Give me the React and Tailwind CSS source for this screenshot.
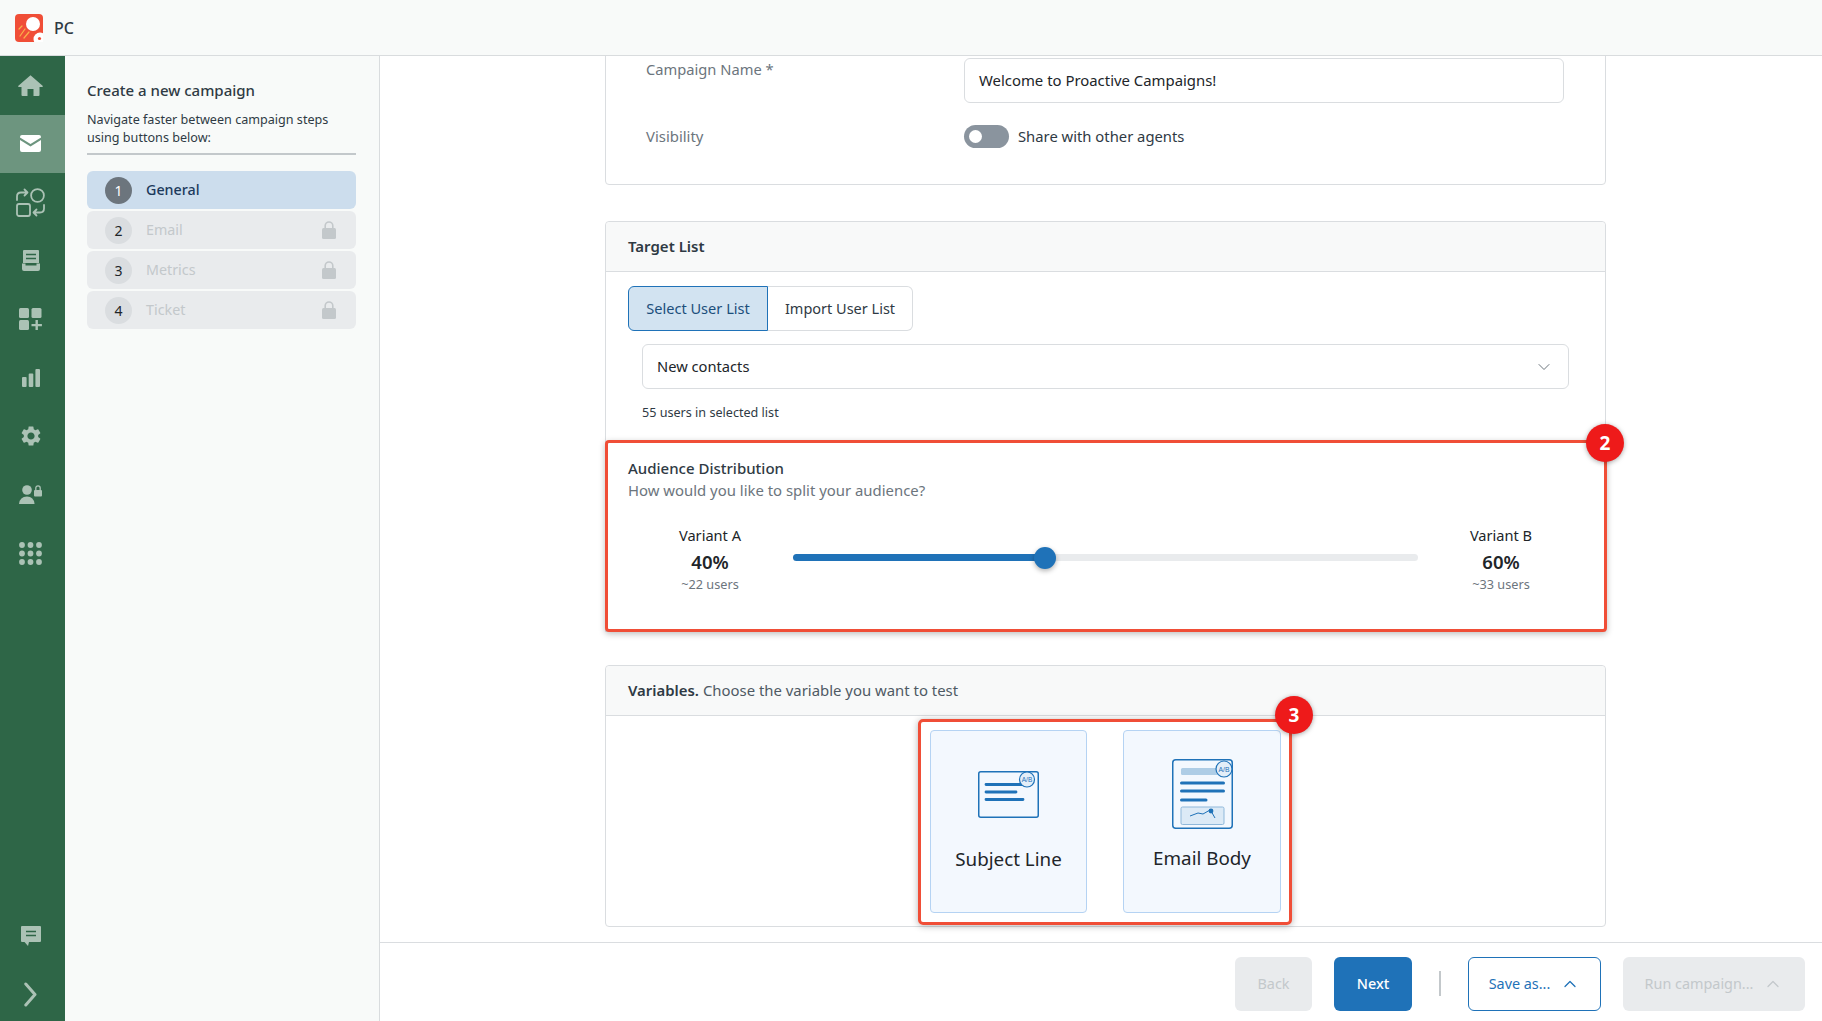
import React from 'react'
import { ChevronDown, ChevronUp } from 'lucide-react'
import { MdSettings } from 'react-icons/md'

const steps = [
  { num: 1, name: 'General', active: true },
  { num: 2, name: 'Email' },
  { num: 3, name: 'Metrics' },
  { num: 4, name: 'Ticket' },
]

function Logo() {
  return (
    <svg width="28" height="28" viewBox="0 0 28 28">
      <rect width="28" height="28" rx="4" fill="#f04e37" />
      <circle cx="18" cy="10" r="7" fill="#fff" />
      <path d="M5 22l5-7M9 24l5-6M4 15l3-3" stroke="#f9b24a" strokeWidth="1.2" strokeLinecap="round" />
      <circle cx="25" cy="25" r="6.5" fill="#fff" />
      <circle cx="24.5" cy="24.5" r="1.6" fill="#f04e37" />
    </svg>
  )
}

const c = '#abc2b5'

const sideIcons = [
  <svg width="25" height="21" viewBox="0 0 25 21"><path fill={c} d="M12.5.3 24.6 10.8Q25.2 12 23.8 12H21.5V20Q21.5 21 20.5 21H15.5V14H9.5V21H4.5Q3.5 21 3.5 20V12H1.2Q-.2 12 .4 10.8Z" /></svg>,
  <svg width="21" height="17" viewBox="0 0 21 17"><path fill="#fff" d="M0 2Q0 0 2 0H19Q21 0 21 2V2.5L10.5 9 0 2.5ZM0 5 10.5 11.5 21 5V15Q21 17 19 17H2Q0 17 0 15Z" /></svg>,
  <svg width="29" height="29" viewBox="0 0 29 29" fill="none" stroke={c} strokeWidth="1.8" strokeLinecap="round" strokeLinejoin="round">
    <circle cx="21.5" cy="7.5" r="6.4" />
    <rect x="1" y="16" width="13" height="12" rx="2" />
    <path d="M1 12V8.5Q1 4.5 5 4.5H11M8.5 1.5l3 3-3 3M28 17v3.5Q28 24.5 24 24.5H18M20.5 21.5l-3 3 3 3" />
  </svg>,
  <svg width="18" height="21" viewBox="0 0 18 21">
    <path fill={c} d="M2 0H16Q17 0 17 1V13H1V1Q1 0 2 0Z" />
    <path stroke="#2e6647" strokeWidth="1.6" d="M4 4.5H14M4 8.5H14" />
    <path fill={c} d="M0 13.5H3.5V15.5H14.5V13.5H18V19Q18 21 16 21H2Q0 21 0 19Z" />
  </svg>,
  <svg width="23" height="22" viewBox="0 0 23 22" fill={c}>
    <rect width="10" height="10" rx="1.5" />
    <rect x="12.5" width="10" height="10" rx="1.5" />
    <rect y="12" width="10" height="10" rx="1.5" />
    <path d="M16.5 12h2.4v4h4v2.2h-4V22h-2.4v-3.8h-4V16h4Z" />
  </svg>,
  <svg width="18" height="18" viewBox="0 0 18 18" fill={c}>
    <rect y="8" width="4.6" height="10" rx="1" />
    <rect x="6.7" y="4.5" width="4.6" height="13.5" rx="1" />
    <rect x="13.4" width="4.6" height="18" rx="1" />
  </svg>,
  <MdSettings size={24} color={c} />,
  <svg width="23" height="19" viewBox="0 0 23 19" fill={c}>
    <circle cx="8" cy="5" r="4.8" />
    <path d="M0 19Q.8 11.5 8 11.5 14.8 11.5 15.6 19Z" />
    <rect x="15" y="5" width="8" height="6.5" rx="1" />
    <path d="M16.8 5.5V3a2.2 2.2 0 0 1 4.4 0V5.5" fill="none" stroke={c} strokeWidth="1.3" />
  </svg>,
  <svg width="23" height="23" viewBox="0 0 23 23" fill={c}>
    {[3, 11.5, 20].map((y) => [3, 11.5, 20].map((x) => <circle key={x + '-' + y} cx={x} cy={y} r="2.9" />))}
  </svg>,
]

function SideItem({ active, children }) {
  return (
    <div className={`h-[58.5px] flex items-center justify-center pr-[4px] ${active ? 'bg-[#6d957f]' : ''}`}>{children}</div>
  )
}

function Lock() {
  return (
    <svg width="14" height="18" viewBox="0 0 14 18">
      <path d="M3.2 8V4.8a3.8 3.8 0 0 1 7.6 0V8" fill="none" stroke="#c3c8cb" strokeWidth="1.6" />
      <rect y="7" width="14" height="11" rx="1.5" fill="#c3c8cb" />
    </svg>
  )
}

function Badge({ className, children }) {
  return (
    <div className={`absolute w-[38px] h-[38px] rounded-full bg-[#ee1a1a] text-white font-bold text-[19px] flex items-center justify-center shadow-[0_1px_5px_rgba(0,0,0,0.35)] z-10 ${className}`}>
      {children}
    </div>
  )
}

function SubjectIcon() {
  return (
    <svg width="61" height="47" viewBox="0 0 61 47" fill="none">
      <rect x="0.75" y="0.75" width="59.5" height="45.5" rx="2" stroke="#1f72b8" strokeWidth="1.5" />
      <path d="M8 13.5H46M8 21H38M8 28.5H45" stroke="#1f72b8" strokeWidth="2.8" strokeLinecap="round" />
      <circle cx="49" cy="8.5" r="7.5" fill="#e3eef8" stroke="#1f72b8" strokeWidth="1.2" />
      <text x="49" y="11" textAnchor="middle" fontSize="6.5" fill="#1f72b8" fontFamily="Liberation Sans">A/B</text>
    </svg>
  )
}

function BodyIcon() {
  return (
    <svg width="61" height="70" viewBox="0 0 61 70" fill="none">
      <rect x="0.75" y="0.75" width="59.5" height="68.5" rx="3" stroke="#1f72b8" strokeWidth="1.5" />
      <rect x="9" y="9" width="37" height="7" rx="1.5" fill="#aecde6" />
      <path d="M9.5 24H51.5M9.5 32H51.5M9.5 41H34" stroke="#1f72b8" strokeWidth="3" strokeLinecap="round" />
      <rect x="9" y="48" width="43" height="17.5" rx="1.5" fill="#dceaf6" stroke="#8fb8da" />
      <path d="M18 57L26 54L31 55L38 51M39 52L43 59" stroke="#1f72b8" strokeWidth="1" />
      <circle cx="39" cy="52" r="2.4" fill="#1f72b8" />
      <circle cx="52" cy="10" r="8" fill="#e3eef8" stroke="#1f72b8" strokeWidth="1.2" />
      <text x="52" y="12.6" textAnchor="middle" fontSize="6.8" fill="#1f72b8" fontFamily="Liberation Sans">A/B</text>
    </svg>
  )
}

function VariantCol({ name, pct, users }) {
  return (
    <div className="w-[130px] flex flex-col items-center text-[#212529]">
      <span className="text-[14.6px] leading-[20px]">{name}</span>
      <span className="text-[18.5px] font-semibold leading-[24px] mt-[5px]">{pct}</span>
      <span className="text-[12.7px] leading-[18px] mt-[1px] text-[#6c757d]">{users}</span>
    </div>
  )
}

export default function App() {
  return (
    <div className="w-[1822px] h-[1021px] overflow-hidden flex flex-col bg-white text-[#2f3a44] font-['Noto_Sans',sans-serif]">
      <header className="h-[56px] shrink-0 border-b border-[#d9dcde] bg-[#f8faf9] flex items-center pl-[15px] gap-[11px]">
        <Logo />
        <span className="text-[16px] font-medium">PC</span>
      </header>

      <div className="flex-1 flex min-h-0">
        <nav className="w-[65px] shrink-0 bg-[#2e6647] flex flex-col">
          {sideIcons.map((icon, i) => (
            <SideItem key={i} active={i === 1}>{icon}</SideItem>
          ))}
          <div className="mt-auto">
            <SideItem>
              <svg width="20" height="20" viewBox="0 0 20 20">
                <path fill={c} d="M1 0H19Q20 0 20 1V15Q20 16 19 16H8L7 20 3.5 16H1Q0 16 0 15V1Q0 0 1 0Z" />
                <path stroke="#2e6647" strokeWidth="1.6" d="M5 5.5H15M5 9.5H15" />
              </svg>
            </SideItem>
            <div className="h-[53px] mt-[3px] flex items-center justify-center pr-[4px]">
              <svg width="13" height="25" viewBox="0 0 13 25" fill="none">
                <path d="M1.8 2 11 12.5 1.8 23" stroke={c} strokeWidth="3" strokeLinecap="round" strokeLinejoin="round" />
              </svg>
            </div>
          </div>
        </nav>

        <aside className="w-[315px] shrink-0 bg-[#f8faf9] border-r border-[#d9dcde] pl-[22px] pr-[23px] pt-[24px]">
          <h2 className="text-[15px] font-medium leading-[20px]">Create a new campaign</h2>
          <p className="text-[12.6px] leading-[18px] mt-[11px] pb-[6px] border-b-2 border-[#c3c8cb]">
            Navigate faster between campaign steps using buttons below:
          </p>
          <div className="mt-[16px] flex flex-col gap-[2px]">
            {steps.map((s) => (
              <div key={s.num} className={`h-[38px] rounded-[6px] flex items-center pl-[18px] pr-[20px] ${s.active ? 'bg-[#ccdded]' : 'bg-[#e9ebed]'}`}>
                <span className={`w-[27px] h-[27px] rounded-full flex items-center justify-center text-[14px] ${s.active ? 'bg-[#6c757d] text-white' : 'bg-[#dadde0] text-[#212529]'}`}>
                  {s.num}
                </span>
                <span className={`ml-[14px] text-[14.3px] ${s.active ? 'font-medium text-[#1c3a5c]' : 'text-[#c3c8cb]'}`}>{s.name}</span>
                {!s.active && <span className="ml-auto flex"><Lock /></span>}
              </div>
            ))}
          </div>
        </aside>

        <main className="flex-1 min-w-0 flex flex-col">
          <div className="flex-1 min-h-0 overflow-hidden pl-[225px]">
            <div className="w-[1001px] flex flex-col">
              <section className="-mt-[11px] h-[140px] border border-[#dadde0] rounded-[4px] pt-[12px] pl-[40px] pr-[41px]">
                <div className="flex">
                  <label className="w-[318px] text-[14.7px] text-[#6c757d] leading-[20px] mt-[1px]">Campaign Name *</label>
                  <div className="flex-1 h-[45px] border border-[#dadde0] rounded-[6px] flex items-center px-[14px] text-[14.9px] text-[#212529]">
                    Welcome to Proactive Campaigns!
                  </div>
                </div>
                <div className="flex items-center mt-[22px]">
                  <label className="w-[318px] text-[14.9px] text-[#6c757d]">Visibility</label>
                  <div className="w-[45px] h-[23px] rounded-full bg-[#8a949e] flex items-center pl-[5px]">
                    <span className="w-[13px] h-[13px] rounded-full bg-white" />
                  </div>
                  <span className="ml-[9px] text-[14.8px]">Share with other agents</span>
                </div>
              </section>

              <section className="mt-[36px] border border-[#dadde0] rounded-t-[4px] relative">
                <div className="h-[50px] bg-[#f8f9f9] border-b border-[#dadde0] flex items-center pl-[22px] text-[15px] font-semibold rounded-t-[4px]">
                  Target List
                </div>
                <div className="pl-[22px] pt-[14px] flex">
                  <button className="h-[45px] w-[140px] bg-[#d2e3f1] border border-[#1f72b8] rounded-l-[6px] text-[14.6px] text-[#1c4f7c]">Select User List</button>
                  <button className="h-[45px] w-[145px] border border-l-0 border-[#dadde0] rounded-r-[6px] text-[14.5px]">Import User List</button>
                </div>
                <div className="ml-[36px] mr-[36px] mt-[13px] h-[45px] border border-[#dadde0] rounded-[6px] flex items-center justify-between pl-[14px] pr-[14px] text-[14.7px] text-[#212529]">
                  New contacts
                  <ChevronDown size={20} strokeWidth={1.2} color="#6c757d" />
                </div>
                <p className="ml-[36px] mt-[15px] text-[12.6px] leading-[18px]">55 users in selected list</p>
                <div className="relative -ml-px -mr-[2px] -mb-px mt-[18px] h-[192px] border-[3px] border-[#f04e37] rounded-[4px] shadow-[0_2px_6px_rgba(0,0,0,0.25)] pl-[20px] pt-[15px]">
                  <Badge className="-right-[20px] -top-[19px]">2</Badge>
                  <h3 className="text-[15px] font-medium leading-[20px]">Audience Distribution</h3>
                  <p className="text-[14.9px] text-[#6c757d] leading-[20px] mt-[2px]">How would you like to split your audience?</p>
                  <div className="flex mt-[25px] pl-[17px]">
                    <VariantCol name="Variant A" pct="40%" users="~22 users" />
                    <div className="w-[625px] mx-[18px] h-[7px] mt-[29px] rounded-full bg-[#e9ebed] relative">
                      <div className="h-full w-[40.3%] rounded-full bg-[#1f72b8]" />
                      <span className="absolute left-[252px] top-[3.5px] -translate-x-1/2 -translate-y-1/2 w-[22px] h-[22px] rounded-full bg-[#1f72b8] shadow-[0_2px_5px_rgba(0,0,0,0.3)]" />
                    </div>
                    <VariantCol name="Variant B" pct="60%" users="~33 users" />
                  </div>
                </div>
              </section>

              <section className="mt-[33px] border border-[#dadde0] rounded-[4px] h-[262px] flex flex-col">
                <div className="h-[50px] shrink-0 bg-[#f8f9f9] border-b border-[#dadde0] flex items-center pl-[22px] text-[14.9px] rounded-t-[4px]">
                  <b className="font-semibold">Variables.</b>
                  <span className="ml-[4px] text-[#4f5a64]">Choose the variable you want to test</span>
                </div>
                <div className="relative self-start ml-[312px] mt-[3px] w-[374px] h-[206px] border-[3px] border-[#f04e37] rounded-[5px] shadow-[0_1px_7px_rgba(0,0,0,0.3)] flex justify-between pl-[9px] pr-[8px] pt-[8px]">
                  <Badge className="-right-[24px] -top-[26px]">3</Badge>
                  <div className="w-[157px] h-[183px] bg-[#f3f8fe] border border-[#b5d3f3] rounded-[4px] flex flex-col items-center pt-[40px]">
                    <SubjectIcon />
                    <span className="mt-[27px] text-[18.8px] leading-[28px] text-[#212529]">Subject Line</span>
                  </div>
                  <div className="w-[158px] h-[183px] bg-[#f3f8fe] border border-[#b5d3f3] rounded-[4px] flex flex-col items-center pt-[28px]">
                    <BodyIcon />
                    <span className="mt-[15px] text-[18.8px] leading-[28px] text-[#212529]">Email Body</span>
                  </div>
                </div>
              </section>
            </div>
          </div>

          <footer className="h-[79px] shrink-0 pt-[3px] border-t border-[#dadde0] flex items-center justify-end pr-[17px] text-[14.4px]">
            <button className="w-[77px] h-[54px] rounded-[6px] bg-[#e9ebed] text-[#c3c8cb]">Back</button>
            <button className="ml-[22px] w-[78px] h-[54px] rounded-[6px] bg-[#1f72b8] text-white font-medium">Next</button>
            <span className="ml-[27px] w-[2px] h-[25px] bg-[#c3c8cb]" />
            <button className="ml-[27px] w-[133px] h-[54px] rounded-[6px] border border-[#1f72b8] text-[#1f72b8] flex items-center justify-center gap-[10px]">
              Save as... <ChevronUp size={20} strokeWidth={1.5} />
            </button>
            <button className="ml-[22px] w-[182px] h-[54px] rounded-[6px] bg-[#e9ebed] text-[#c3c8cb] flex items-center justify-center gap-[10px]">
              Run campaign... <ChevronUp size={20} strokeWidth={1.5} />
            </button>
          </footer>
        </main>
      </div>
    </div>
  )
}
